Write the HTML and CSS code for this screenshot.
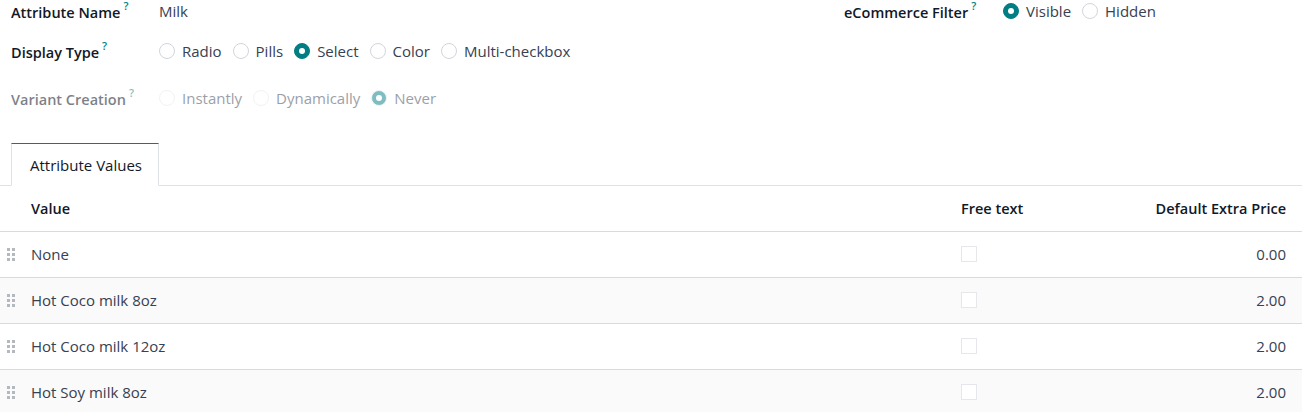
FILE: index.html
```html
<!DOCTYPE html>
<html>
<head>
<meta charset="utf-8">
<link rel="stylesheet" href="styles.css">
</head>
<body>
<div class="form">
  <div class="row row1">
    <div class="group left">
      <div class="label">Attribute Name<sup>?</sup></div>
      <div class="value">Milk</div>
    </div>
    <div class="group right">
      <div class="label">eCommerce Filter<sup>?</sup></div>
      <div class="radios">
        <label class="opt"><span class="radio checked"></span>Visible</label>
        <label class="opt"><span class="radio"></span>Hidden</label>
      </div>
    </div>
  </div>
  <div class="row row2">
    <div class="group">
      <div class="label">Display Type<sup>?</sup></div>
      <div class="radios">
        <label class="opt"><span class="radio"></span>Radio</label>
        <label class="opt"><span class="radio"></span>Pills</label>
        <label class="opt"><span class="radio checked"></span>Select</label>
        <label class="opt"><span class="radio"></span>Color</label>
        <label class="opt"><span class="radio"></span>Multi-checkbox</label>
      </div>
    </div>
  </div>
  <div class="row row3 disabled">
    <div class="group">
      <div class="label">Variant Creation<sup>?</sup></div>
      <div class="radios">
        <label class="opt"><span class="radio"></span>Instantly</label>
        <label class="opt"><span class="radio"></span>Dynamically</label>
        <label class="opt"><span class="radio checked"></span>Never</label>
      </div>
    </div>
  </div>
</div>
<div class="tabs">
  <div class="tab active">Attribute Values</div>
</div>
<table class="list">
  <thead>
    <tr>
      <th class="handle"></th>
      <th class="col-value">Value</th>
      <th class="col-free">Free text</th>
      <th class="col-price">Default Extra Price</th>
    </tr>
  </thead>
  <tbody>
    <tr>
      <td class="handle"><svg class="grip" width="8" height="13" viewBox="0 0 8 13"><rect x="0" y="0" width="3" height="3"/><rect x="5" y="0" width="3" height="3"/><rect x="0" y="5" width="3" height="3"/><rect x="5" y="5" width="3" height="3"/><rect x="0" y="10" width="3" height="3"/><rect x="5" y="10" width="3" height="3"/></svg></td>
      <td class="col-value">None</td>
      <td class="col-free"><span class="check"></span></td>
      <td class="col-price">0.00</td>
    </tr>
    <tr>
      <td class="handle"><svg class="grip" width="8" height="13" viewBox="0 0 8 13"><rect x="0" y="0" width="3" height="3"/><rect x="5" y="0" width="3" height="3"/><rect x="0" y="5" width="3" height="3"/><rect x="5" y="5" width="3" height="3"/><rect x="0" y="10" width="3" height="3"/><rect x="5" y="10" width="3" height="3"/></svg></td>
      <td class="col-value">Hot Coco milk 8oz</td>
      <td class="col-free"><span class="check"></span></td>
      <td class="col-price">2.00</td>
    </tr>
    <tr>
      <td class="handle"><svg class="grip" width="8" height="13" viewBox="0 0 8 13"><rect x="0" y="0" width="3" height="3"/><rect x="5" y="0" width="3" height="3"/><rect x="0" y="5" width="3" height="3"/><rect x="5" y="5" width="3" height="3"/><rect x="0" y="10" width="3" height="3"/><rect x="5" y="10" width="3" height="3"/></svg></td>
      <td class="col-value">Hot Coco milk 12oz</td>
      <td class="col-free"><span class="check"></span></td>
      <td class="col-price">2.00</td>
    </tr>
    <tr>
      <td class="handle"><svg class="grip" width="8" height="13" viewBox="0 0 8 13"><rect x="0" y="0" width="3" height="3"/><rect x="5" y="0" width="3" height="3"/><rect x="0" y="5" width="3" height="3"/><rect x="5" y="5" width="3" height="3"/><rect x="0" y="10" width="3" height="3"/><rect x="5" y="10" width="3" height="3"/></svg></td>
      <td class="col-value">Hot Soy milk 8oz</td>
      <td class="col-free"><span class="check"></span></td>
      <td class="col-price">2.00</td>
    </tr>
  </tbody>
</table>
</body>
</html>
```

FILE: styles.css
```css
* { box-sizing: border-box; }
html, body { margin: 0; padding: 0; background: #fff; }
body {
  font-family: "Open Sans", "Noto Sans", sans-serif;
  font-size: 15px;
  color: #374151;
  width: 1302px;
  height: 412px;
  overflow: hidden;
}
.form { padding: 0 0 0 11px; }
.row { display: flex; align-items: center; height: 22px; }
.row1 { height: 21px; }
.row2 { margin-top: 19px; }
.row3 { margin-top: 25px; }
.group { display: flex; align-items: center; }
.group.left { width: 833px; }
.label {
  width: 148px;
  font-size: 14.5px;
  font-weight: 600;
  color: #111827;
  white-space: nowrap;
}
.right .label { width: 159px; }
sup {
  color: #017e84;
  font-size: 11px;
  font-weight: 600;
  margin-left: 3px;
  position: relative;
  top: -2px;
}
.value { color: #374151; }
.radios { display: flex; align-items: center; }
.opt { display: flex; align-items: center; margin-right: 11px; color: #374151; white-space: nowrap; }
.radio {
  width: 16px; height: 16px; border-radius: 50%;
  border: 1px solid #d1d5db;
  background: #fff;
  margin-right: 7px;
  position: relative;
  flex: none;
}
.radio.checked { background: #017e84; border-color: #017e84; }
.radio.checked::after {
  content: "";
  position: absolute;
  left: 4px; top: 4px;
  width: 6px; height: 6px;
  border-radius: 50%;
  background: #fff;
}
.disabled .label { color: #111827; opacity: 0.55; }
.disabled sup { opacity: 0.9; }
.disabled .opt { opacity: 0.5; }
.disabled .radio { border-color: #e5e7eb; }

.tabs {
  margin-top: 34px;
  padding-left: 11px;
  border-bottom: 1px solid #dee2e6;
  display: flex;
}
.tab {
  width: 148px;
  height: 43px;
  margin-bottom: -1px;
  border: 1px solid #dee2e6;
  border-top-color: #714b67;
  border-bottom-color: #fff;
  background: #fff;
  padding-left: 18px;
  display: flex;
  align-items: center;
  color: #111827;
}
.list {
  width: 1302px;
  border-collapse: collapse;
  table-layout: fixed;
}
.list th, .list td {
  border-bottom: 1px solid #d8dadd;
  padding: 0;
  vertical-align: middle;
  text-align: left;
}
.list th { height: 45px; font-size: 14.5px; font-weight: 600; color: #111827; }
.list td { height: 46px; }
.list tbody tr:nth-child(even) td { background: #fafafa; }
.list tbody tr:last-child td { border-bottom: none; }
.handle { width: 31px; padding-left: 7px !important; }
.col-free { width: 141px; }
.col-price { width: 200px; text-align: right !important; padding-right: 16px !important; }
.grip { display: block; fill: #b4b9bf; }
.check {
  display: block;
  width: 16px; height: 16px;
  border: 1px solid #e5e7eb;
  background: #fff;
}
```
